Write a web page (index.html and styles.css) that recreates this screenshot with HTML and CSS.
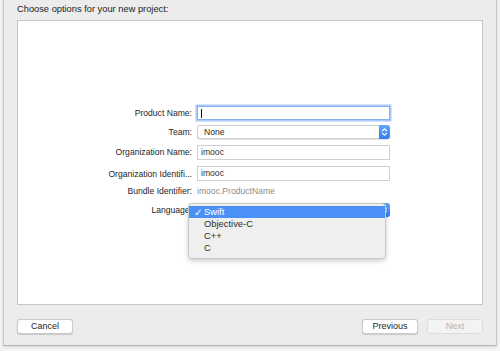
FILE: index.html
```html
<!DOCTYPE html>
<html>
<head>
<meta charset="utf-8">
<link rel="stylesheet" href="styles.css">
</head>
<body>
<div class="window">
  <div class="title">Choose options for your new project:</div>
  <div class="panel">
    <div class="form">
      <div class="label">Product Name:</div>
      <div class="field focus"><span class="caret"></span></div>
      <div class="label">Team:</div>
      <div class="popup"><span class="popup-text">None</span><span class="stepper"><svg width="7" height="10" viewBox="0 0 7 10"><path d="M1.2 4 L3.5 1.7 L5.8 4 M1.2 6 L3.5 8.3 L5.8 6" fill="none" stroke="#fff" stroke-width="1.1"/></svg></span></div>
      <div class="label">Organization Name:</div>
      <div class="field">imooc</div>
      <div class="label">Organization Identifi...</div>
      <div class="field">imooc</div>
      <div class="label">Bundle Identifier:</div>
      <div class="static">imooc.ProductName</div>
      <div class="label">Language:</div>
      <div class="popup"><span class="popup-text"></span><span class="stepper"><svg width="7" height="10" viewBox="0 0 7 10"><path d="M1.2 4 L3.5 1.7 L5.8 4 M1.2 6 L3.5 8.3 L5.8 6" fill="none" stroke="#fff" stroke-width="1.1"/></svg></span></div>
    </div>
    <div class="menu">
      <div class="item selected"><span class="check">✓</span>Swift</div>
      <div class="item"><span class="check"></span>Objective-C</div>
      <div class="item"><span class="check"></span>C++</div>
      <div class="item"><span class="check"></span>C</div>
    </div>
  </div>
  <div class="footer">
    <div class="btn">Cancel</div>
    <div class="spacer"></div>
    <div class="btn">Previous</div>
    <div class="btn disabled">Next</div>
  </div>
</div>
</body>
</html>
```

FILE: styles.css
```css
html, body {
  margin: 0;
  padding: 0;
}
body {
  width: 500px;
  height: 351px;
  overflow: hidden;
  background: #f4f4f4;
  font-family: "Liberation Sans", Arial, sans-serif;
  color: #2b2b2b;
}
.window {
  box-sizing: border-box;
  margin-left: 3px;
  width: 494px;
  height: 346px;
  background: #ececec;
  border-left: 1px solid #c4c4c4;
  border-right: 1px solid #c4c4c4;
  border-bottom: 1px solid #b4b4b4;
  box-shadow: 0 1px 3px rgba(0,0,0,0.12);
  padding: 0 13px;
  display: flex;
  flex-direction: column;
}
.title {
  height: 20px;
  line-height: 19px;
  font-size: 9.3px;
  color: #222;
}
.panel {
  position: relative;
  box-sizing: border-box;
  height: 285px;
  background: #fff;
  border: 1px solid #c6c6c6;
}
.form {
  margin-top: 83px;
  display: grid;
  grid-template-columns: 174px 193px;
  grid-template-rows: 17px 21px 20px 23px 12px 26px;
  column-gap: 5px;
  align-items: center;
  font-size: 8.6px;
}
.label {
  text-align: right;
  white-space: nowrap;
  color: #262626;
}
.field {
  box-sizing: border-box;
  height: 15px;
  border: 1px solid #cfcfcf;
  background: #fff;
  padding-left: 3px;
  line-height: 13px;
  color: #333;
  position: relative;
}
.field.focus {
  height: 14px;
  border-color: #86b2f2;
  box-shadow: 0 0 0 1.5px #a9c9f7;
}
.caret {
  position: absolute;
  left: 3px;
  top: 2px;
  width: 1px;
  height: 9px;
  background: #111;
}
.popup {
  box-sizing: border-box;
  height: 14px;
  border: 1px solid #cdcdcd;
  border-radius: 3px;
  background: #fff;
  box-shadow: 0 0.5px 1px rgba(0,0,0,0.12);
  display: flex;
  align-items: center;
  justify-content: space-between;
  padding-left: 6px;
  color: #2b2b2b;
}
.stepper {
  width: 11px;
  height: 14px;
  margin-right: -1px;
  border-radius: 0 3px 3px 0;
  background: linear-gradient(#69a8f8, #2d7ef3);
  display: flex;
  align-items: center;
  justify-content: center;
}
.static {
  color: #8c8c8c;
}
.menu {
  position: absolute;
  left: 170px;
  top: 182px;
  width: 198px;
  box-sizing: border-box;
  padding: 2px 0 4px;
  background: #efefef;
  border: 1px solid #c9c9c9;
  border-radius: 4px;
  box-shadow: 0 2px 5px rgba(0,0,0,0.2);
  font-size: 9.4px;
  color: #2b2b2b;
}
.item {
  height: 12px;
  line-height: 12px;
  padding-left: 5px;
  display: flex;
}
.item.selected {
  background: #4b90f6;
  color: #fff;
}
.check {
  width: 10px;
  font-size: 10.5px;
  font-weight: bold;
  font-family: "DejaVu Sans", sans-serif;
}
.footer {
  display: flex;
  padding-top: 14px;
  gap: 9px;
}
.spacer {
  flex: 1;
}
.btn {
  box-sizing: border-box;
  width: 56px;
  height: 15px;
  border: 1px solid #cacaca;
  border-radius: 3px;
  background: #fff;
  box-shadow: 0 0.5px 1px rgba(0,0,0,0.15);
  text-align: center;
  line-height: 13px;
  font-size: 9px;
  color: #262626;
}
.btn.disabled {
  background: #f3f3f3;
  border-color: #dcdcdc;
  box-shadow: none;
  color: #b2b2b2;
}
```
